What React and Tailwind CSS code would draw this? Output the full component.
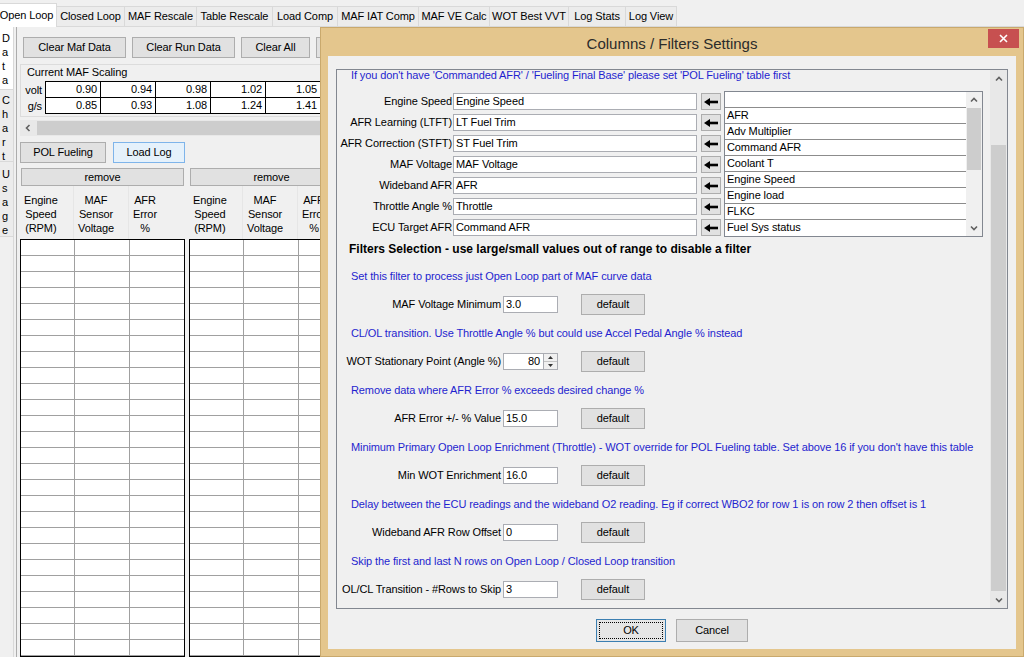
import React from 'react'

const tabs = [
  { name: 'Open Loop', w: 'w-[61px]', active: true },
  { name: 'Closed Loop', w: 'w-[68px]' },
  { name: 'MAF Rescale', w: 'w-[72px]' },
  { name: 'Table Rescale', w: 'w-[76px]' },
  { name: 'Load Comp', w: 'w-[65px]' },
  { name: 'MAF IAT Comp', w: 'w-[81px]' },
  { name: 'MAF VE Calc', w: 'w-[71px]' },
  { name: 'WOT Best VVT', w: 'w-[79px]' },
  { name: 'Log Stats', w: 'w-[57px]' },
  { name: 'Log View', w: 'w-[51px]' },
]

const voltRow = ['0.90', '0.94', '0.98', '1.02', '1.05', '1.09', '1.13']
const gsRow = ['0.85', '0.93', '1.08', '1.24', '1.41', '1.59', '1.79']

const mappings = [
  ['Engine Speed', 'Engine Speed'],
  ['AFR Learning (LTFT)', 'LT Fuel Trim'],
  ['AFR Correction (STFT)', 'ST Fuel Trim'],
  ['MAF Voltage', 'MAF Voltage'],
  ['Wideband AFR', 'AFR'],
  ['Throttle Angle %', 'Throttle'],
  ['ECU Target AFR', 'Command AFR'],
]

const columnList = ['AFR', 'Adv Multiplier', 'Command AFR', 'Coolant T', 'Engine Speed', 'Engine load', 'FLKC', 'Fuel Sys status']

const filters = [
  { note: 'Set this filter to process just Open Loop part of MAF curve data', label: 'MAF Voltage Minimum', value: '3.0' },
  { note: 'CL/OL transition. Use Throttle Angle % but could use Accel Pedal Angle % instead', label: 'WOT Stationary Point (Angle %)', value: '80', spinner: true },
  { note: 'Remove data where AFR Error % exceeds desired change %', label: 'AFR Error +/- % Value', value: '15.0' },
  { note: "Minimum Primary Open Loop Enrichment (Throttle) - WOT override for POL Fueling table. Set above 16 if you don't have this table", label: 'Min WOT Enrichment', value: '16.0' },
  { note: 'Delay between the ECU readings and the wideband O2 reading. Eg if correct WBO2 for row 1 is on row 2 then offset is 1', label: 'Wideband AFR Row Offset', value: '0' },
  { note: 'Skip the first and last N rows on Open Loop / Closed Loop transition', label: 'OL/CL Transition - #Rows to Skip', value: '3' },
]

const rows = Array.from({ length: 26 }, (_, i) => i)

const Btn = ({ className = '', children }) => (
  <div className={`border border-[#adadad] bg-[#e1e1e1] flex items-center justify-center whitespace-nowrap ${className}`}>
    {children}
  </div>
)

const Chevron = ({ dir = 'up' }) => {
  const d = {
    up: 'M1 4.5 L4 1.5 L7 4.5',
    down: 'M1 1.5 L4 4.5 L7 1.5',
  }[dir]
  return (
    <svg width="8" height="6" viewBox="0 0 8 6">
      <path d={d} fill="none" stroke="#606060" strokeWidth="1.6" />
    </svg>
  )
}

const LeftChevron = () => (
  <svg width="6" height="8" viewBox="0 0 6 8">
    <path d="M4.5 1 L1.5 4 L4.5 7" fill="none" stroke="#606060" strokeWidth="1.6" />
  </svg>
)

const ArrowLeft = () => (
  <svg width="14" height="8" viewBox="0 0 14 8">
    <polygon points="0,4 6,0 6,8" fill="#000" />
    <rect x="5" y="2.7" width="9" height="2.6" fill="#000" />
  </svg>
)

// vertical tab with one letter per line
const SideTab = ({ text, active, className }) => (
  <div
    className={`flex flex-col items-start pl-[2px] leading-[14px] border-b border-[#d9d9d9] ${
      active ? 'bg-white' : 'bg-[#ececec]'
    } ${className}`}
  >
    {text.split('').map((c, i) => (
      <span key={i}>{c}</span>
    ))}
  </div>
)

const LogTable = ({ className = '' }) => (
  <div className={`w-[165px] shrink-0 flex flex-col ${className}`}>
    <Btn className="mx-[1px] mt-[1px] h-[18px]">remove</Btn>
    <div className="flex h-[53px]">
      <div className="w-[54px] pl-[4px] pt-[7px] border-r border-[#e6e6e6]">
        <div className="inline-block text-center leading-[14px]">Engine<br />Speed<br />(RPM)</div>
      </div>
      <div className="w-[55px] pl-[4px] pt-[7px] border-r border-[#e6e6e6]">
        <div className="inline-block text-center leading-[14px]">MAF<br />Sensor<br />Voltage</div>
      </div>
      <div className="w-[54px] pl-[4px] pt-[7px]">
        <div className="inline-block text-center leading-[14px]">AFR<br />Error<br />%</div>
      </div>
    </div>
    <div className="border border-black bg-white">
      {rows.map(r => (
        <div key={r} className="flex">
          <div className="w-[54px] h-[16px] border-r border-b border-[#a0a0a0]" />
          <div className="w-[55px] h-[16px] border-r border-b border-[#a0a0a0]" />
          <div className="w-[54px] h-[16px] border-b border-[#a0a0a0]" />
        </div>
      ))}
    </div>
  </div>
)

const OpenLoopPanel = () => (
  <div className="flex-1 min-w-0 ml-[2px] border-l border-[#acacac] flex flex-col">
    <div className="flex gap-[6px] ml-[6px] mt-[10px]">
      <Btn className="w-[103px] h-[21px]">Clear Maf Data</Btn>
      <Btn className="w-[103px] h-[21px]">Clear Run Data</Btn>
      <Btn className="w-[69px] h-[21px]">Clear All</Btn>
      <Btn className="w-[90px] h-[21px]">GO</Btn>
    </div>

    {/* Current MAF Scaling */}
    <div className="ml-[3px] mt-[6px] h-[54px] border border-[#dcdcdc] flex flex-col">
      <div className="pl-[6px] mt-[1px] leading-[12px]">Current MAF Scaling</div>
      <div className="flex mt-[3px]">
        <div className="w-[24px] flex flex-col text-right pr-[3px] pt-[1px]">
          <div className="h-[16px] leading-[16px]">volt</div>
          <div className="h-[16px] leading-[16px]">g/s</div>
        </div>
        <div className="border border-black bg-white">
          <div className="flex border-b border-black">
            {voltRow.map(v => (
              <div key={v} className="w-[55px] h-[15px] leading-[15px] text-right pr-[3px] border-r border-black">{v}</div>
            ))}
          </div>
          <div className="flex">
            {gsRow.map(v => (
              <div key={v} className="w-[55px] h-[15px] leading-[15px] text-right pr-[3px] border-r border-black">{v}</div>
            ))}
          </div>
        </div>
      </div>
    </div>

    {/* horizontal scroll bar */}
    <div className="ml-[3px] mt-[3px] h-[16px] flex bg-[#e8e8e8]">
      <div className="w-[16px] flex items-center justify-center">
        <LeftChevron />
      </div>
      <div className="flex-1 my-[1px] ml-[1px] bg-[#cdcdcd]" />
    </div>

    <div className="flex ml-[3px] mt-[6px]">
      <Btn className="w-[86px] h-[21px]">POL Fueling</Btn>
      <div className="ml-[7px] w-[72px] h-[21px] border border-[#7eb4ea] bg-[#e5f1fb] flex items-center justify-center">
        Load Log
      </div>
    </div>

    <div className="flex ml-[3px] mt-[4px]">
      <LogTable />
      <LogTable className="ml-[4px]" />
    </div>
  </div>
)

const TextBox = ({ className = '', children }) => (
  <div className={`h-[17px] bg-white border border-[#abadb3] pl-[2px] leading-[15px] whitespace-nowrap overflow-hidden ${className}`}>
    {children}
  </div>
)

const FiltersDialog = () => (
  <div className="absolute left-[320px] top-[27px] w-[704px] h-[630px] bg-[#e4c68d] border border-[#c9a96d] flex flex-col">
    <div className="relative h-[28px] pt-[5px] flex items-center justify-center text-[15px] tracking-normal text-[#2b2b2b]">
      Columns / Filters Settings
      <div className="absolute right-[4px] top-[1px] w-[31px] h-[19px] bg-[#c75050] flex items-center justify-center">
        <svg width="9" height="9" viewBox="0 0 9 9">
          <path d="M1 1 L8 8 M8 1 L1 8" stroke="#fff" strokeWidth="1.6" />
        </svg>
      </div>
    </div>

    <div className="flex-1 mx-[7px] mb-[7px] bg-[#f0f0f0] flex flex-col">
      {/* scroll pane */}
      <div className="mx-[8px] mt-[13px] h-[540px] border border-[#828790] flex overflow-hidden">
        <div className="flex-1 min-w-0 flex flex-col">
          <div className="h-[21px] pl-[14px] leading-[11px] text-[#1f1fcf] whitespace-nowrap">
            If you don't have 'Commanded AFR' / 'Fueling Final Base' please set 'POL Fueling' table first
          </div>

          <div className="flex">
            <div className="flex flex-col">
              {mappings.map(([label, value]) => (
                <div key={label} className="h-[21px] flex items-center">
                  <div className="w-[115px] flex justify-end whitespace-nowrap">{label}</div>
                  <TextBox className="ml-[1px] w-[244px]">{value}</TextBox>
                  <Btn className="ml-[4px] w-[20px] h-[17px]">
                    <ArrowLeft />
                  </Btn>
                </div>
              ))}
            </div>

            {/* column list */}
            <div className="ml-[3px] w-[259px] h-[146px] border border-[#828790] bg-white flex">
              <div className="flex-1 flex flex-col">
                <div className="h-[16px] border-b border-[#8c8c8c]" />
                {columnList.map(c => (
                  <div key={c} className="h-[16px] pl-[2px] leading-[15px] border-b border-[#8c8c8c] last:border-b-0 whitespace-nowrap">
                    {c}
                  </div>
                ))}
              </div>
              <div className="w-[16px] bg-[#f0f0f0] flex flex-col">
                <div className="h-[16px] flex items-center justify-center">
                  <Chevron dir="up" />
                </div>
                <div className="h-[62px] mx-[1px] bg-[#cdcdcd]" />
                <div className="flex-1" />
                <div className="h-[16px] flex items-center justify-center">
                  <Chevron dir="down" />
                </div>
              </div>
            </div>
          </div>

          <div className="h-[25px] pt-[4px] pl-[12px] leading-[14px] font-bold text-[12px] tracking-normal whitespace-nowrap">
            Filters Selection - use large/small values out of range to disable a filter
          </div>

          {filters.map(f => (
            <div key={f.label} className="h-[57px] flex flex-col">
              <div className="h-[26px] pl-[14px] flex items-center text-[#1f1fcf] whitespace-nowrap">{f.note}</div>
              <div className="h-[31px] flex items-center">
                <div className="w-[164px] flex justify-end whitespace-nowrap">{f.label}</div>
                {f.spinner ? (
                  <div className="ml-[2px] w-[55px] h-[17px] bg-white border border-[#abadb3] flex">
                    <div className="flex-1 text-right pr-[3px] leading-[15px]">{f.value}</div>
                    <div className="w-[14px] border-l border-[#abadb3] flex flex-col bg-[#f0f0f0]">
                      <div className="flex-1 flex items-center justify-center border-b border-[#c4c4c4]">
                        <svg width="5" height="3" viewBox="0 0 5 3"><polygon points="0,3 2.5,0 5,3" fill="#333" /></svg>
                      </div>
                      <div className="flex-1 flex items-center justify-center">
                        <svg width="5" height="3" viewBox="0 0 5 3"><polygon points="0,0 5,0 2.5,3" fill="#333" /></svg>
                      </div>
                    </div>
                  </div>
                ) : (
                  <TextBox className="ml-[2px] w-[55px]">{f.value}</TextBox>
                )}
                <Btn className="ml-[23px] w-[64px] h-[21px]">default</Btn>
              </div>
            </div>
          ))}
        </div>

        {/* vertical scroll bar */}
        <div className="w-[17px] bg-[#e8e8e8] flex flex-col">
          <div className="h-[17px] flex items-center justify-center">
            <Chevron dir="up" />
          </div>
          <div className="flex-1 flex flex-col">
            <div className="mt-[58px] h-[446px] mx-[1px] bg-[#cdcdcd]" />
          </div>
          <div className="h-[17px] flex items-center justify-center">
            <Chevron dir="down" />
          </div>
        </div>
      </div>

      <div className="flex justify-center gap-[10px] mt-[10px]">
        <div className="w-[70px] h-[23px] border border-[#3c7fb1] bg-[#e5e5e5] p-[2px]">
          <div className="w-full h-full border border-dotted border-black flex items-center justify-center">OK</div>
        </div>
        <Btn className="w-[72px] h-[23px]">Cancel</Btn>
      </div>
    </div>
  </div>
)

export default function App() {
  return (
    <div className="relative w-[1024px] h-[657px] overflow-hidden bg-[#f0f0f0] text-black text-[11px] tracking-[-0.1px] font-['Liberation_Sans',Arial,sans-serif]">
      {/* main tab strip */}
      <div className="flex items-end h-[27px] -ml-[4px] border-b border-[#d9d9d9]">
        {tabs.map(t => (
          <div
            key={t.name}
            className={`${t.w} flex items-center justify-center whitespace-nowrap ${
              t.active
                ? 'relative z-10 -mb-px h-[24px] bg-white border border-b-0 border-[#d9d9d9]'
                : 'h-[20px] bg-[#ececec] border-t border-r border-[#d9d9d9]'
            }`}
          >
            {t.name}
          </div>
        ))}
      </div>

      <div className="flex h-[630px]">
        <div className="w-[14px] shrink-0 flex flex-col border-r border-[#d9d9d9]">
          <SideTab text="Data" active className="h-[63px] pt-[4px]" />
          <SideTab text="Chart" className="h-[72px] pt-[3px]" />
          <SideTab text="Usage" className="h-[75px] pt-[5px]" />
        </div>
        <OpenLoopPanel />
      </div>

      <FiltersDialog />
    </div>
  )
}
